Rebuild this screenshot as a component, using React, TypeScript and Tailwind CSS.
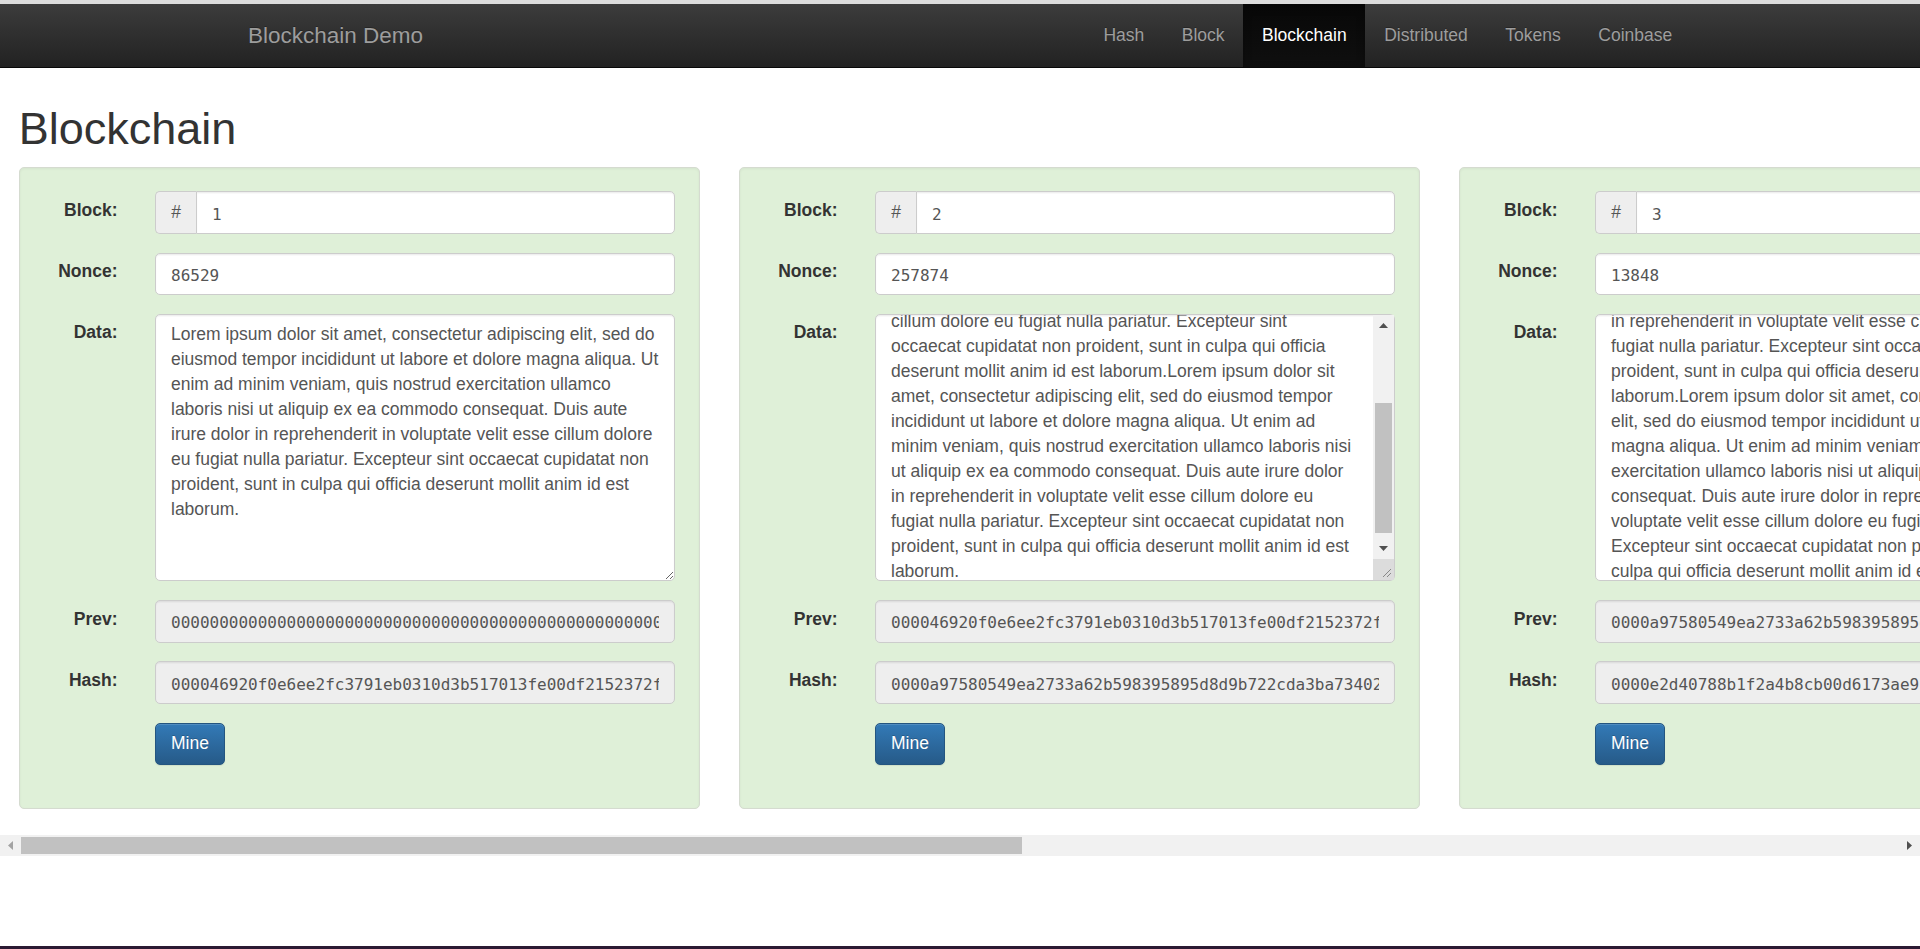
import { useLayoutEffect, useRef, useState } from 'react'

const LOREM =
  'Lorem ipsum dolor sit amet, consectetur adipiscing elit, sed do eiusmod tempor incididunt ut labore et dolore magna aliqua. Ut enim ad minim veniam, quis nostrud exercitation ullamco laboris nisi ut aliquip ex ea commodo consequat. Duis aute irure dolor in reprehenderit in voluptate velit esse cillum dolore eu fugiat nulla pariatur. Excepteur sint occaecat cupidatat non proident, sunt in culpa qui officia deserunt mollit anim id est laborum.'

const NAV_LINKS = ['Hash', 'Block', 'Blockchain', 'Distributed', 'Tokens', 'Coinbase']

const HASHES = [
  '000046920f0e6ee2fc3791eb0310d3b517013fe00df2152372fc8a1e4b09d7a3',
  '0000a97580549ea2733a62b598395895d8d9b722cda3ba734021f6c08e5b93d7',
  '0000e2d40788b1f2a4b8cb00d6173ae9c4f0b1a27d93e6580c2fa14b7d6e0935',
  '00005c81f3a09e27b64d1c8e0f9a3b7252e6d4c18a0f93b7e25c6d10a84f7e21',
  '0000b3e97a2c40d18f6e5b09c3a7d2148e6f0a95c1b37d8e42f0a6c9d315be70',
]

const BLOCKS = [
  { n: 1, nonce: '86529', data: LOREM },
  { n: 2, nonce: '257874', data: LOREM + LOREM },
  { n: 3, nonce: '13848', data: LOREM + LOREM + LOREM },
  { n: 4, nonce: '35230', data: LOREM + LOREM + LOREM + LOREM },
  { n: 5, nonce: '56265', data: LOREM + LOREM + LOREM + LOREM + LOREM },
].map((b, i) => ({ ...b, prev: i === 0 ? '0'.repeat(64) : HASHES[i - 1], hash: HASHES[i] }))

const inputBase =
  "h-[42.5px] w-full border-[1.25px] border-[#ccc] px-[15px] pt-[3px] text-[16px] text-[#555] font-['DejaVu_Sans_Mono',monospace] outline-none shadow-[inset_0_1.25px_1.25px_rgba(0,0,0,0.075)]"

function Grip() {
  return (
    <svg width="12" height="12" viewBox="0 0 12 12" className="text-[#888]">
      <path d="M11 3L3 11M11 7L7 11" stroke="currentColor" strokeWidth="1" />
    </svg>
  )
}

function DataBox({ text }: { text: string }) {
  const ref = useRef<HTMLTextAreaElement>(null)
  const overflow = text.length > LOREM.length
  const [thumb, setThumb] = useState({ top: 0, height: 0 })

  useLayoutEffect(() => {
    const el = ref.current
    if (!el || !overflow) return
    const max = el.scrollHeight - el.clientHeight
    // the reference is scrolled a little short of the very bottom
    el.scrollTop = max - 11
    const track = el.offsetHeight - 2.5 - 63
    const h = Math.max(20, (track * el.clientHeight) / el.scrollHeight)
    setThumb({ height: h, top: max > 0 ? ((track - h) * el.scrollTop) / max : 0 })
  }, [text, overflow])

  return (
    <div className="relative">
      <textarea
        ref={ref}
        readOnly
        value={text}
        className={`block h-[267.5px] w-full resize-y overflow-hidden rounded-[5px] border-[1.25px] border-[#ccc] bg-white py-[7.5px] pl-[15px] text-[17.5px] leading-[25px] text-[#555] outline-none shadow-[inset_0_1.25px_1.25px_rgba(0,0,0,0.075)] ${
          overflow ? 'pr-[36px]' : 'pr-[15px]'
        }`}
      />
      {overflow && (
        <div className="absolute top-[1.25px] right-[1.25px] bottom-[1.25px] flex w-[21px] flex-col bg-[#f1f1f1]">
          <div className="flex h-[21px] items-center justify-center">
            <svg width="9" height="5" viewBox="0 0 9 5"><path d="M4.5 0L9 5H0z" fill="#505050" /></svg>
          </div>
          <div className="relative flex-1">
            <div
              className="absolute left-[2px] right-[2px] bg-[#c1c1c1]"
              style={{ top: thumb.top, height: thumb.height }}
            />
          </div>
          <div className="flex h-[21px] items-center justify-center">
            <svg width="9" height="5" viewBox="0 0 9 5"><path d="M0 0H9L4.5 5z" fill="#505050" /></svg>
          </div>
          <div className="flex h-[21px] items-end justify-end bg-[#dcdcdc] p-[2px]">
            <Grip />
          </div>
        </div>
      )}
    </div>
  )
}

function Row({ label, children }: { label?: string; children: React.ReactNode }) {
  return (
    <div className="mb-[18.75px] flex gap-[37.5px]">
      <div className="w-[74px] shrink-0 pt-[6.5px] text-right text-[17.5px] leading-[25px] font-bold text-[#333]">
        {label}
      </div>
      <div className="min-w-0 flex-1">{children}</div>
    </div>
  )
}

function BlockCard({ block }: { block: (typeof BLOCKS)[number] }) {
  return (
    <div className="w-[681px] shrink-0 rounded-[5px] border border-[#d5dbd0] bg-[#dff0d8] px-[23.75px] pt-[23.75px] pb-[23.75px] shadow-[inset_0_1px_3px_rgba(0,0,0,0.05)]">
      <Row label="Block:">
        <div className="flex">
          <span className="flex h-[42.5px] w-[41px] shrink-0 items-center justify-center rounded-l-[5px] border-[1.25px] border-r-0 border-[#ccc] bg-[#eee] text-[17.5px] text-[#555]">
            #
          </span>
          <input readOnly value={block.n} className={`${inputBase} rounded-r-[5px] bg-white`} />
        </div>
      </Row>
      <Row label="Nonce:">
        <input readOnly value={block.nonce} className={`${inputBase} rounded-[5px] bg-white`} />
      </Row>
      <Row label="Data:">
        <DataBox text={block.data} />
      </Row>
      <Row label="Prev:">
        <input readOnly value={block.prev} className={`${inputBase} rounded-[5px] bg-[#eee]`} />
      </Row>
      <Row label="Hash:">
        <input readOnly value={block.hash} className={`${inputBase} rounded-[5px] bg-[#eee]`} />
      </Row>
      <Row>
        <button className="h-[42.5px] rounded-[5px] border-[1.25px] border-[#245580] bg-gradient-to-b from-[#337ab7] to-[#265a88] px-[15px] text-[17.5px] leading-[25px] text-white [text-shadow:0_-1px_0_rgba(0,0,0,0.2)] shadow-[inset_0_1px_0_rgba(255,255,255,0.15),0_1px_1px_rgba(0,0,0,0.075)]">
          Mine
        </button>
      </Row>
    </div>
  )
}

export default function App() {
  return (
    <div className="flex h-[949px] flex-col overflow-hidden bg-white font-['Liberation_Sans',Arial,sans-serif]">
      <div className="h-[4px] shrink-0 bg-[#dcdcdc]" />

      {/* Navbar */}
      <nav className="h-[64px] shrink-0 border-b border-[#080808] bg-gradient-to-b from-[#3c3c3c] to-[#222]">
        <div className="mx-auto flex h-full w-[1462px] justify-between">
          <a className="flex items-center pl-[19px] text-[22.5px] text-[#9d9d9d] [text-shadow:0_-1px_0_rgba(0,0,0,0.25)]">
            Blockchain Demo
          </a>
          <ul className="flex">
            {NAV_LINKS.map(label => (
              <li key={label}>
                <a
                  className={`flex h-full items-center px-[18.75px] text-[17.5px] [text-shadow:0_-1px_0_rgba(0,0,0,0.25)] ${
                    label === 'Blockchain'
                      ? 'bg-gradient-to-b from-[#080808] to-[#0f0f0f] text-white shadow-[inset_0_3px_9px_rgba(0,0,0,0.25)]'
                      : 'text-[#9d9d9d]'
                  }`}
                >
                  {label}
                </a>
              </li>
            ))}
          </ul>
        </div>
      </nav>

      <h1 className="mt-[36px] mb-[13px] px-[18.75px] text-[45px] leading-[49.5px] font-medium text-[#333]">
        Blockchain
      </h1>

      {/* Chain, scrolled horizontally */}
      <div className="shrink-0">
        <div className="overflow-hidden">
          <div className="flex gap-[39px] pb-[26px] pl-[18.75px]">
            {BLOCKS.map(b => (
              <BlockCard key={b.n} block={b} />
            ))}
          </div>
        </div>
        <div className="flex h-[21px] bg-[#f1f1f1]">
          <div className="flex w-[21px] items-center justify-center">
            <svg width="5" height="9" viewBox="0 0 5 9"><path d="M5 0V9L0 4.5z" fill="#a3a3a3" /></svg>
          </div>
          <div className="flex-1 py-[2px]">
            <div className="h-full w-[1001px] bg-[#c1c1c1]" />
          </div>
          <div className="flex w-[21px] items-center justify-center">
            <svg width="5" height="9" viewBox="0 0 5 9"><path d="M0 0L5 4.5L0 9z" fill="#505050" /></svg>
          </div>
        </div>
      </div>

      <div className="flex-1" />
      <div className="h-[3px] shrink-0 bg-[#2b1a33]" />
    </div>
  )
}
